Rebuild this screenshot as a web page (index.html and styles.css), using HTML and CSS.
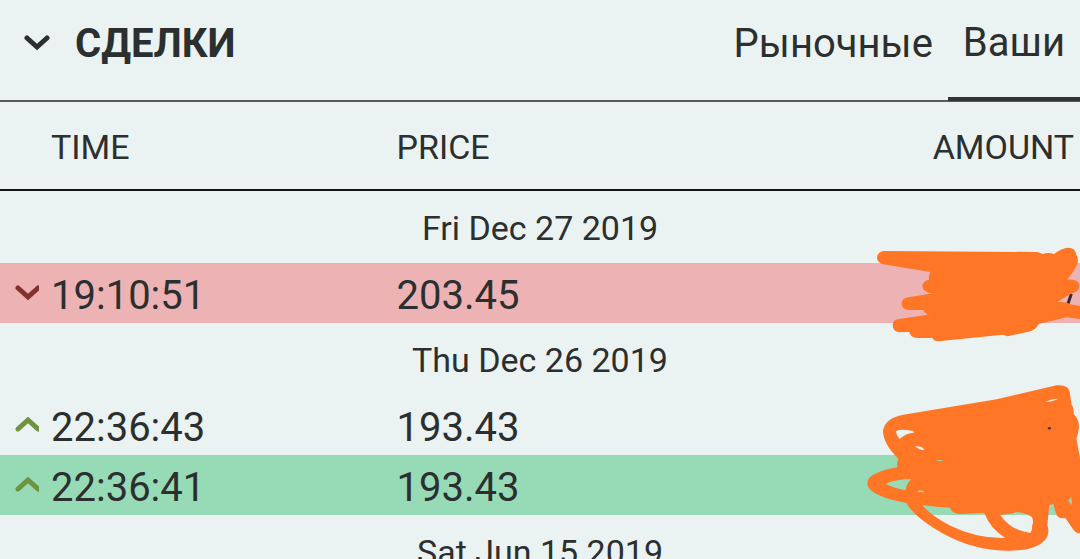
FILE: index.html
```html
<!DOCTYPE html>
<html lang="ru">
<head>
  <meta charset="UTF-8" />
  <meta name="viewport" content="width=device-width, initial-scale=1.0" />
  <title>Сделки</title>
  <link rel="stylesheet" href="styles.css">
</head>
<body>
  <header class="header">
    <h1 class="title">
      <button class="toggle" type="button" aria-expanded="true">
        <svg class="toggle-icon" viewBox="0 0 26 16" aria-hidden="true"><path d="M3 3 L13 12 L23 3" /></svg>
        СДЕЛКИ
      </button>
    </h1>
    <nav class="tabs">
      <button class="tab" type="button">Рыночные</button>
      <button class="tab active" type="button">Ваши</button>
    </nav>
  </header>

  <table class="trades">
    <thead>
      <tr>
        <th class="time" scope="col">TIME</th>
        <th class="price" scope="col">PRICE</th>
        <th class="amount" scope="col">AMOUNT</th>
      </tr>
    </thead>
    <tbody>
      <tr class="date"><td colspan="3">Fri Dec 27 2019</td></tr>
      <tr class="trade sell">
        <td>
          <div class="cell">
            <svg class="arrow" viewBox="0 0 24 16" aria-hidden="true"><path d="M3 3 L13 12 L23 3" /></svg>
            19:10:51
          </div>
        </td>
        <td>203.45</td>
        <td class="amount">
          <svg class="scribble scribble-top" viewBox="0 0 660 345" aria-hidden="true">
            <path class="digit" d="M634 176 L624 206 M615 138 L621 138" />
            <path class="ink" d="M70 48 L530 51 Q540 52 548 57 Q564 51 582 57 Q604 39 626 38 Q646 39 648 58 Q657 70 652 88 Q640 113 621 134 Q659 131 658 153 Q657 171 637 174 L590 202 Q615 199 632 208 L660 213 L660 252 L620 247 L536 267 Q527 286 505 290 L443 304 L428 299 L235 319 Q222 319 217 309 L170 309 Q151 307 148 291 L118 292 Q98 289 98 270 Q99 254 117 252 L203 239 Q192 233 189 225 L144 225 Q125 222 125 205 Q126 189 145 187 L220 175 Q188 174 187 154 Q189 136 207 134 Q205 120 211 111 L70 88 Q51 83 51 67 Q53 51 70 48 Z" />
          </svg>
        </td>
      </tr>
      <tr class="date"><td colspan="3">Thu Dec 26 2019</td></tr>
      <tr class="trade">
        <td>
          <div class="cell">
            <svg class="arrow up" viewBox="0 0 24 16" aria-hidden="true"><path d="M3 12 L13 3 L23 12" /></svg>
            22:36:43
          </div>
        </td>
        <td>193.43</td>
        <td class="amount">
          <svg class="scribble scribble-bottom" viewBox="0 0 660 552" aria-hidden="true">
            <path class="ink" fill-rule="evenodd" d="M130 119 L410 73 L590 31 Q626 28 629 51 L635 90 Q642 98 641 117 Q657 132 657 156 Q655 178 649 190 L660 250 L660 475 Q647 475 638 461 L616 429 Q592 433 587 413 L580 387 L568 390 L562 451 Q571 476 555 495 Q525 528 445 527 Q340 527 246 474 Q163 427 139 384 Q35 364 23 332 Q17 308 49 295 Q76 282 112 277 Q110 262 115 251 Q69 207 69 166 Q76 129 130 119 Z
              M108 168 Q122 160 160 168 L162 173 Q137 174 119 192 Q108 180 108 168 Z
              M165 214 Q188 212 193 225 Q178 226 165 214 Z
              M228 257 Q239 253 251 257 Q240 259 228 257 Z
              M77 326 Q111 312 154 312 Q137 329 137 346 Q99 338 77 326 Z
              M172 350 Q181 341 195 352 Z
              M554 81 Q580 70 595 71 Q580 79 554 81 Z
              M187 391 Q228 396 270 398 Q276 417 302 417 L373 414 Q389 459 436 489 Q352 491 271 452 Q215 423 187 391 Z
              M420 419 Q450 419 470 411 Q491 412 515 425 Q523 439 516 452 Q518 464 511 474 Q453 467 420 419 Z
              M624 377 L634 366 L636 390 Z" />
            <path class="digit" d="M568 157 L568 163" />
          </svg>
        </td>
      </tr>
      <tr class="trade buy">
        <td>
          <div class="cell">
            <svg class="arrow up" viewBox="0 0 24 16" aria-hidden="true"><path d="M3 12 L13 3 L23 12" /></svg>
            22:36:41
          </div>
        </td>
        <td>193.43</td>
        <td class="amount"></td>
      </tr>
      <tr class="date"><td colspan="3">Sat Jun 15 2019</td></tr>
    </tbody>
  </table>
</body>
</html>
```
FILE: styles.css
```css
html, body {
  margin: 0;
  padding: 0;
  height: 100%;
  overflow: hidden;
}
body {
  background: #ebf2f2;
  color: #2b2f2f;
  font-family: Roboto, sans-serif;
  font-size: 40px;
}
button {
  background: none;
  border: none;
  padding: 0;
  color: inherit;
  font: inherit;
  cursor: pointer;
}
.header {
  display: flex;
  justify-content: space-between;
  height: 100px;
  border-bottom: 2px solid #555b5b;
}
.title {
  margin: 0;
  font-size: 40px;
  font-weight: 700;
}
.toggle {
  display: flex;
  align-items: center;
  gap: 25px;
  height: 86px;
  padding-left: 24px;
}
.toggle-icon {
  width: 26px;
  height: 16px;
}
.toggle-icon path,
.arrow path {
  fill: none;
  stroke: currentColor;
  stroke-width: 5;
  stroke-linecap: round;
}
.tabs {
  display: flex;
}
.tab {
  height: 101px;
  padding: 0 15px 14px;
}
.tab.active {
  padding-bottom: 12px;
  border-bottom: 4px solid #303434;
}
.trades {
  width: 100%;
  table-layout: fixed;
  border-collapse: separate;
  border-spacing: 0;
}
th {
  height: 85px;
  padding: 2px 0 0;
  border-bottom: 2px solid #101414;
  font-size: 34px;
  font-weight: 400;
  text-align: left;
}
th.time {
  width: 32%;
  padding-left: 51px;
}
th.price {
  width: 33%;
}
th.amount {
  padding-right: 6px;
  text-align: right;
}
td {
  padding: 0;
}
.date td {
  height: 70px;
  padding-top: 2px;
  font-size: 34px;
  text-align: center;
}
.trade td {
  height: 56px;
  padding-top: 4px;
}
.sell {
  background: #edb2b3;
}
.buy {
  background: #96dab6;
}
.cell {
  display: flex;
  align-items: center;
  gap: 12px;
  padding-left: 15px;
}
.arrow {
  width: 24px;
  height: 16px;
  margin-bottom: 4px;
  color: #84302f;
}
.arrow.up {
  color: #6f943e;
}
td.amount {
  position: relative;
}
/* marker strokes over the amounts */
.scribble {
  position: absolute;
  right: 0;
  width: 220px;
}
.scribble-top {
  top: -28px;
}
.scribble-bottom {
  top: -20px;
  z-index: 1;
}
.ink {
  fill: #ff7626;
}
.digit {
  stroke: #3b2b30;
  stroke-width: 9;
}
```
